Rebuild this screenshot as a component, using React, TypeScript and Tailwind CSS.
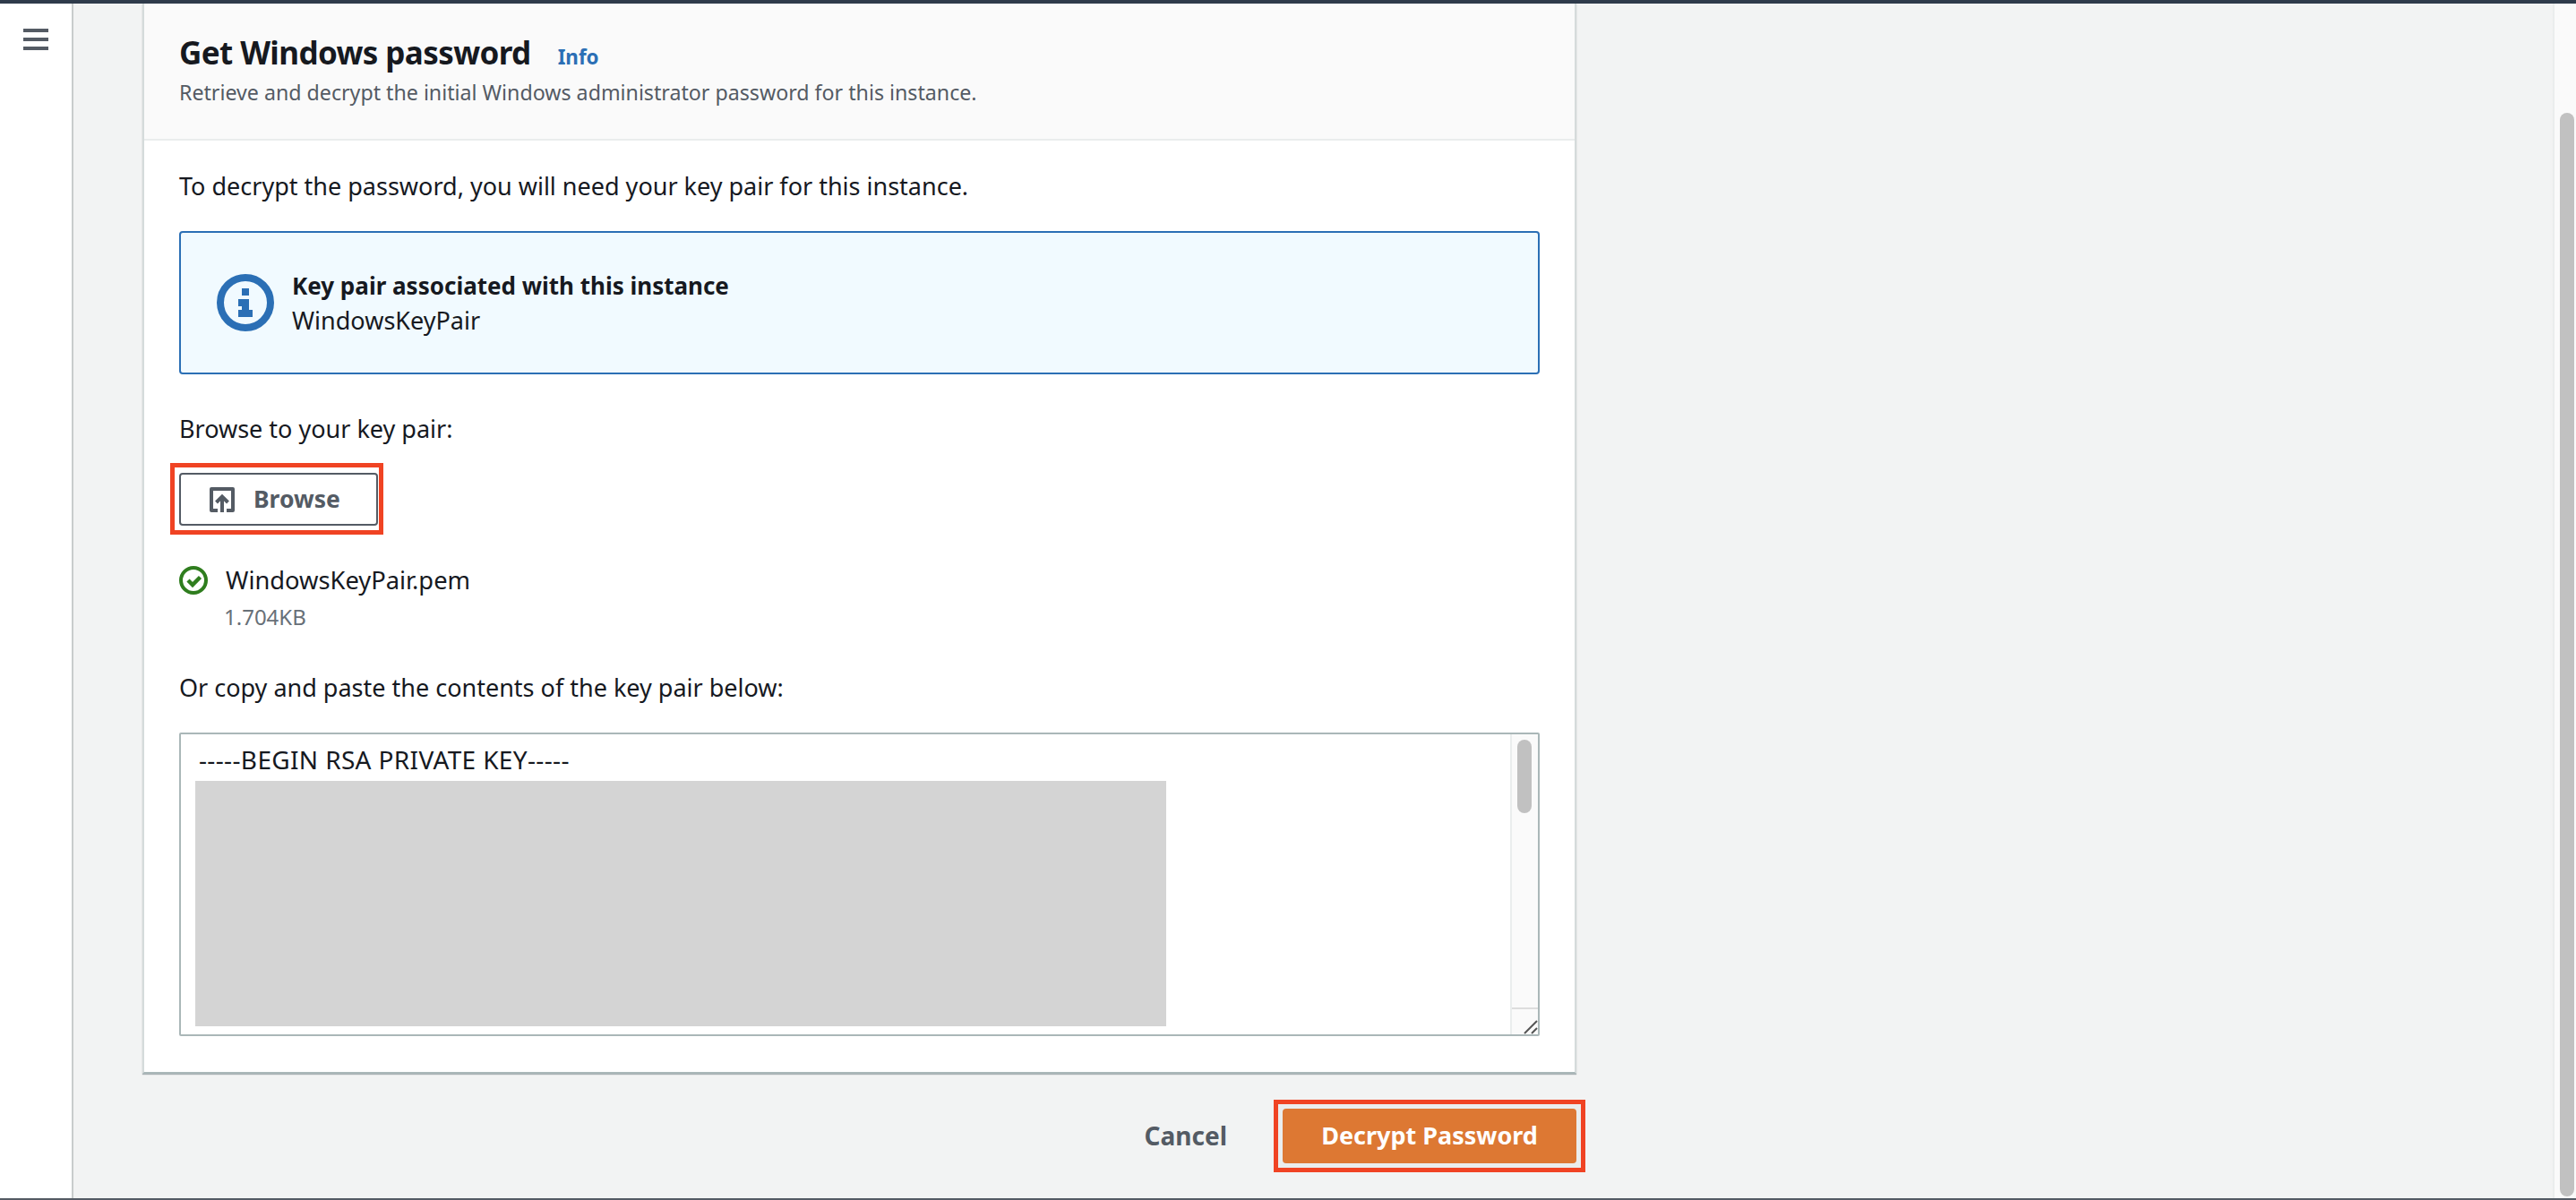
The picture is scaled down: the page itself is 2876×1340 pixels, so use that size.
import React from 'react';

const font = { fontFamily: '"Noto Sans", "Open Sans", sans-serif' };

const MenuIcon = () => (
  <div className="flex flex-col gap-[6px] w-[28px]">
    <div className="h-[4px] bg-[#545b64]" />
    <div className="h-[4px] bg-[#545b64]" />
    <div className="h-[4px] bg-[#545b64]" />
  </div>
);

const InfoIcon = () => (
  <svg width="64" height="64" viewBox="0 0 64 64" className="shrink-0">
    <circle cx="32" cy="32" r="28" fill="none" stroke="#2b6fb5" strokeWidth="8" />
    <rect x="28" y="16" width="8" height="8" fill="#2b6fb5" />
    <path d="M24 28h12v12h4v8H24v-8h4v-4h-4z" fill="#2b6fb5" />
  </svg>
);

const UploadIcon = () => (
  <svg width="28" height="28" viewBox="0 0 28 28" fill="none" stroke="#545b64" strokeWidth="4" className="shrink-0">
    <path d="M9 26H2V2h24v24h-7" strokeLinejoin="round" />
    <path d="M14 28V11M7.5 17L14 10.5l6.5 6.5" />
  </svg>
);

const CheckIcon = () => (
  <svg width="32" height="32" viewBox="0 0 32 32" fill="none" stroke="#2f7d1e" className="shrink-0">
    <circle cx="16" cy="16" r="14" strokeWidth="4" />
    <path d="M10 16l5 5 8.5-8.5" strokeWidth="4.5" />
  </svg>
);

export default function App() {
  return (
    <div className="h-[1340px] w-[2876px] flex flex-col overflow-hidden bg-[#f2f3f3]" style={font}>
      <div className="h-[4px] bg-[#2f3b4b] shrink-0" />

      <div className="flex flex-1 min-h-0">
        {/* Side navigation */}
        <aside className="w-[82px] shrink-0 bg-white border-r-2 border-[#c8cccc] pl-[26px] pt-[28px]">
          <MenuIcon />
        </aside>

        {/* Main content */}
        <main className="flex-1 pl-[77px]">
          <div className="w-[1601px] bg-white border-x-2 border-b-2 border-x-[#d5dbdb] border-b-[#aab7b8] shadow-[0_1px_1px_0_rgba(0,28,36,0.3)]">
            <header className="h-[153px] bg-[#fafafa] border-b-2 border-[#eaeded] pl-[39px] pt-[30px]">
              <div className="flex items-baseline">
                <h1 className="text-[35px] leading-[50px] tracking-[-0.6px] font-bold text-[#16191f]">Get Windows password</h1>
                <span className="ml-[30px] text-[22.4px] font-bold text-[#2b6fb5]">Info</span>
              </div>
              <p className="mt-[1px] text-[23.2px] leading-[36px] text-[#545b64]">
                Retrieve and decrypt the initial Windows administrator password for this instance.
              </p>
            </header>

            <div className="px-[39px] pt-[31px] pb-[40px]">
              <p className="text-[27px] leading-[40px] text-[#16191f]">
                To decrypt the password, you will need your key pair for this instance.
              </p>

              <div className="mt-[30px] h-[160px] rounded-[4px] border-2 border-[#2b6fb5] bg-[#f1faff] flex items-center pl-[40px] gap-[20px]">
                <InfoIcon />
                <div>
                  <div className="text-[26px] leading-[40px] font-bold text-[#16191f]">Key pair associated with this instance</div>
                  <div className="-mt-px text-[27px] leading-[40px] text-[#16191f]">WindowsKeyPair</div>
                </div>
              </div>

              <p className="mt-[41px] text-[27px] leading-[40px] text-[#16191f]">Browse to your key pair:</p>

              {/* Browse button, red annotation around it */}
              <div className="mt-[18px] -ml-[10px] w-[238px] h-[80px] border-[5px] border-[#f04323] pl-[5px] pt-[6px]">
                <button className="w-[222px] h-[59px] rounded-[4px] border-2 border-[#545b64] bg-white flex items-center pl-[32px] gap-[21px] text-[26.5px] font-bold text-[#545b64]">
                  <UploadIcon />
                  Browse
                </button>
              </div>

              <div className="mt-[35px] h-[32px] flex items-start gap-[20px]">
                <CheckIcon />
                <span className="text-[27.3px] leading-[32px] text-[#16191f]">WindowsKeyPair.pem</span>
              </div>
              <p className="mt-[7px] pl-[50px] text-[24px] leading-[36px] text-[#687078]">1.704KB</p>

              <p className="mt-[41px] text-[27px] leading-[40px] text-[#16191f]">Or copy and paste the contents of the key pair below:</p>

              {/* Key textarea */}
              <div className="mt-[30px] h-[339px] rounded-[2px] border-2 border-[#aab7b8] bg-white flex">
                <div className="flex-1 pl-[16px] pt-[4px]">
                  <div className="pl-[4px] text-[28px] leading-[48px] tracking-[0.35px] text-[#16191f]">-----BEGIN RSA PRIVATE KEY-----</div>
                  <div className="w-[1084px] h-[274px] bg-[#d4d4d4]" />
                </div>
                <div className="w-[31px] bg-[#fafafa] border-l-2 border-[#eaeded] flex flex-col">
                  <div className="flex-1 pl-[6px] pt-[6px]">
                    <div className="w-[16px] h-[82px] rounded-full bg-[#c1c1c1]" />
                  </div>
                  <div className="h-[30px] border-t-2 border-[#dddddd] flex items-end justify-end">
                    <svg width="18" height="18" viewBox="0 0 18 18" stroke="#555" strokeWidth="2">
                      <path d="M3 17L17 3M11 17l6-6" />
                    </svg>
                  </div>
                </div>
              </div>
            </div>
          </div>

          {/* Actions */}
          <div className="w-[1611px] mt-[29px] flex items-center justify-end">
            <button className="mr-[52px] pb-[1px] text-[28px] font-bold text-[#545b64]">Cancel</button>
            <div className="w-[348px] h-[81px] border-[5px] border-[#f04323] p-[5px] bg-[#eaeded]">
              <button className="w-[328px] h-[61px] pb-[1px] rounded-[4px] bg-[#dd7833] text-[27px] font-bold text-white">Decrypt Password</button>
            </div>
          </div>
        </main>

        {/* Page scrollbar */}
        <div className="w-[26px] shrink-0 bg-[#fafafa] border-l-2 border-[#eaeded] pl-[6px] pt-[122px] pb-[2px]">
          <div className="w-[16px] h-full rounded-full bg-[#c1c1c1]" />
        </div>
      </div>

      <div className="h-[2px] bg-[#545b64] shrink-0" />
    </div>
  );
}
